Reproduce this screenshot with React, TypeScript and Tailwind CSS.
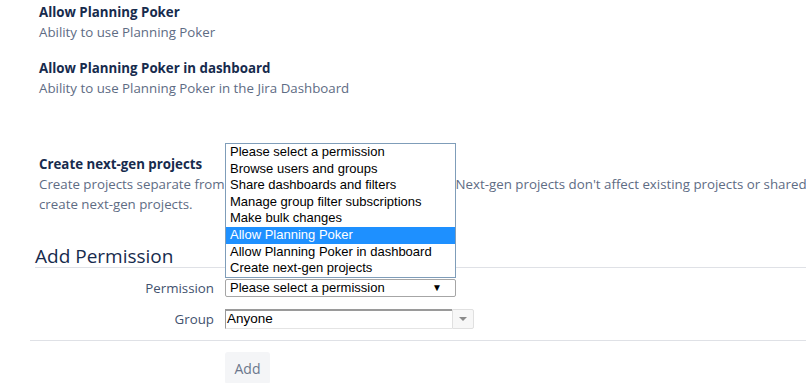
import React from "react";

const permissions = [
  "Please select a permission",
  "Browse users and groups",
  "Share dashboards and filters",
  "Manage group filter subscriptions",
  "Make bulk changes",
  "Allow Planning Poker",
  "Allow Planning Poker in dashboard",
  "Create next-gen projects",
];

export default function App() {
  const highlighted = "Allow Planning Poker";

  return (
    <div className="relative w-[806px] h-[383px] overflow-hidden bg-white font-['Open_Sans',sans-serif] text-[13.3px]">
      {/* Permission list */}
      <div className="pl-[39px] pt-[2px]">
        <div>
          <div className="font-bold leading-5 text-[#172b4d]">Allow Planning Poker</div>
          <div className="leading-5 text-[#5e6c84]">Ability to use Planning Poker</div>
        </div>
        <div className="mt-4">
          <div className="font-bold leading-5 text-[#172b4d]">Allow Planning Poker in dashboard</div>
          <div className="leading-5 text-[#5e6c84]">Ability to use Planning Poker in the Jira Dashboard</div>
        </div>
        <div className="mt-[56px]">
          <div className="font-bold leading-5 text-[#172b4d]">Create next-gen projects</div>
          <div className="leading-5 text-[#5e6c84] whitespace-nowrap">
            Create projects separate from shared configurations and schemes. Next-gen projects don't affect existing
            projects or shared configurations like workflows, fields or permissions. Only licensed users can
            <br />
            create next-gen projects.
          </div>
        </div>
      </div>

      {/* Add permission form */}
      <h2 className="ml-[35px] mt-[31px] text-[19px] leading-[22px] text-[#172b4d] border-b border-[#dfe1e6]">
        Add Permission
      </h2>

      <div className="pl-[30px] pt-[11px] flex flex-col gap-3">
        <div className="flex items-center gap-[11px]">
          <label className="w-[184px] text-right text-[#42526e] leading-[18px]">Permission</label>
          <div className="w-[231px] h-[18px] border border-[#a6a6a6] rounded-[2px] flex items-center justify-between pl-[4px] pr-[13px] font-['Liberation_Sans',Arial,sans-serif] text-[13px] text-black">
            <span>Please select a permission</span>
            <span className="text-[10px] leading-none">▼</span>
          </div>
        </div>
        <div className="flex items-center gap-[11px]">
          <label className="w-[184px] text-right text-[#42526e] leading-5">Group</label>
          <div className="flex h-5">
            <div className="w-[227px] h-5 border-t-2 border-l border-[#9a9a9a] border-b border-b-[#e4e4e4] flex items-center pl-[1px] font-['Liberation_Sans',Arial,sans-serif] text-[13.5px] text-black">
              Anyone
            </div>
            <div className="w-[22px] h-5 border border-[#e0e0e0] rounded-r-[2px] bg-[#f7f7f7] flex items-center justify-center">
              <span className="block w-0 h-0 border-l-[4px] border-r-[4px] border-t-[4px] border-l-transparent border-r-transparent border-t-[#8a8a8a]" />
            </div>
          </div>
        </div>
      </div>

      <div className="ml-[30px] mt-[11px] border-t border-[#dfe1e6]" />

      <div className="pl-[225px] pt-[11px]">
        <button className="w-[45px] h-8 rounded-[3px] bg-[#f4f5f7] text-[#6b778c] text-[14px]">Add</button>
      </div>

      {/* Open select list */}
      <ul className="absolute left-[225px] top-[143px] w-[231px] border border-[#7f9db9] bg-white font-['Liberation_Sans',Arial,sans-serif] text-[13px] text-black">
        {permissions.map((p) => (
          <li
            key={p}
            className={
              p === highlighted
                ? "h-[16.6px] leading-[16.6px] pl-[4px] bg-[#1e90ff] text-white"
                : "h-[16.6px] leading-[16.6px] pl-[4px]"
            }
          >
            {p}
          </li>
        ))}
      </ul>
    </div>
  );
}
